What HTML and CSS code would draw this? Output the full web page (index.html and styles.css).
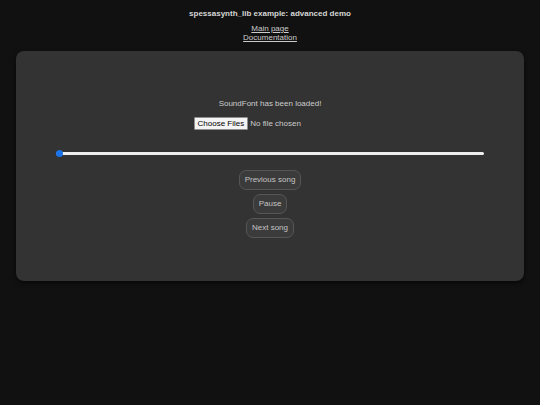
FILE: index.html
```html
<!DOCTYPE html>
<html lang="en">
<head>
<meta charset="utf-8">
<title>spessasynth_lib example: advanced demo</title>
<link rel="stylesheet" href="styles.css">
</head>
<body>
<header class="top">
  <h1 class="title">spessasynth_lib example: advanced demo</h1>
  <nav class="links">
    <a href="#">Main page</a>
    <a href="#">Documentation</a>
  </nav>
</header>
<main class="card">
  <p class="status">SoundFont has been loaded!</p>
  <input class="file" type="file" multiple>
  <input class="slider" type="range" min="0" max="100" value="0">
  <div class="controls">
    <button class="btn">Previous song</button>
    <button class="btn">Pause</button>
    <button class="btn">Next song</button>
  </div>
</main>
</body>
</html>
```
FILE: styles.css
```css
html, body {
  margin: 0;
  padding: 0;
  background: #111111;
}
body {
  font-family: "Liberation Sans", Arial, sans-serif;
  font-size: 8px;
  color: #cccccc;
  height: 405px;
  overflow: hidden;
}
.top {
  display: flex;
  flex-direction: column;
  align-items: center;
  padding-top: 9px;
}
.title {
  margin: 0;
  font-size: 8px;
  font-weight: bold;
  line-height: 10px;
  color: #d6d6d6;
}
.links {
  display: flex;
  flex-direction: column;
  align-items: center;
  margin-top: 5px;
  line-height: 9px;
}
.links a {
  color: #cccccc;
  text-decoration: underline;
}
.card {
  box-sizing: border-box;
  margin: 9px 16px 0;
  height: 230px;
  background: #333333;
  border-radius: 8px;
  box-shadow: 0 2px 4px rgba(0, 0, 0, 0.6);
  padding: 48px 40px 0;
  display: flex;
  flex-direction: column;
  align-items: center;
}
.status {
  margin: 0;
  line-height: 10px;
  color: #cccccc;
}
.file {
  margin-top: 8px;
  width: 153px;
  font-family: "Liberation Sans", Arial, sans-serif;
  font-size: 8px;
  color: #cccccc;
  height: 13px;
}
.file::file-selector-button {
  font-family: "Liberation Sans", Arial, sans-serif;
  font-size: 8px;
  color: #000000;
  background: #f4f4f4;
  border: 1px solid #8f8f8f;
  border-radius: 1px;
  padding: 0 3px;
  margin-right: 2px;
  height: 13px;
  line-height: 9px;
}
.slider {
  -webkit-appearance: none;
  appearance: none;
  align-self: stretch;
  margin: 20px 0 0;
  height: 7px;
  background: transparent;
}
.slider::-webkit-slider-runnable-track {
  height: 3px;
  background: #efefef;
  border-radius: 2px;
}
.slider::-webkit-slider-thumb {
  -webkit-appearance: none;
  appearance: none;
  width: 7px;
  height: 7px;
  border-radius: 50%;
  background: #1a73e8;
  margin-top: -2px;
}
.controls {
  margin-top: 13px;
  display: flex;
  flex-direction: column;
  align-items: center;
  gap: 4px;
}
.btn {
  font-family: "Liberation Sans", Arial, sans-serif;
  font-size: 8px;
  line-height: 10px;
  color: #c4c4c4;
  background: #3b3b3b;
  border: 1px solid #555555;
  border-radius: 7px;
  padding: 4px 5px;
  height: 20px;
  box-sizing: border-box;
}
```
